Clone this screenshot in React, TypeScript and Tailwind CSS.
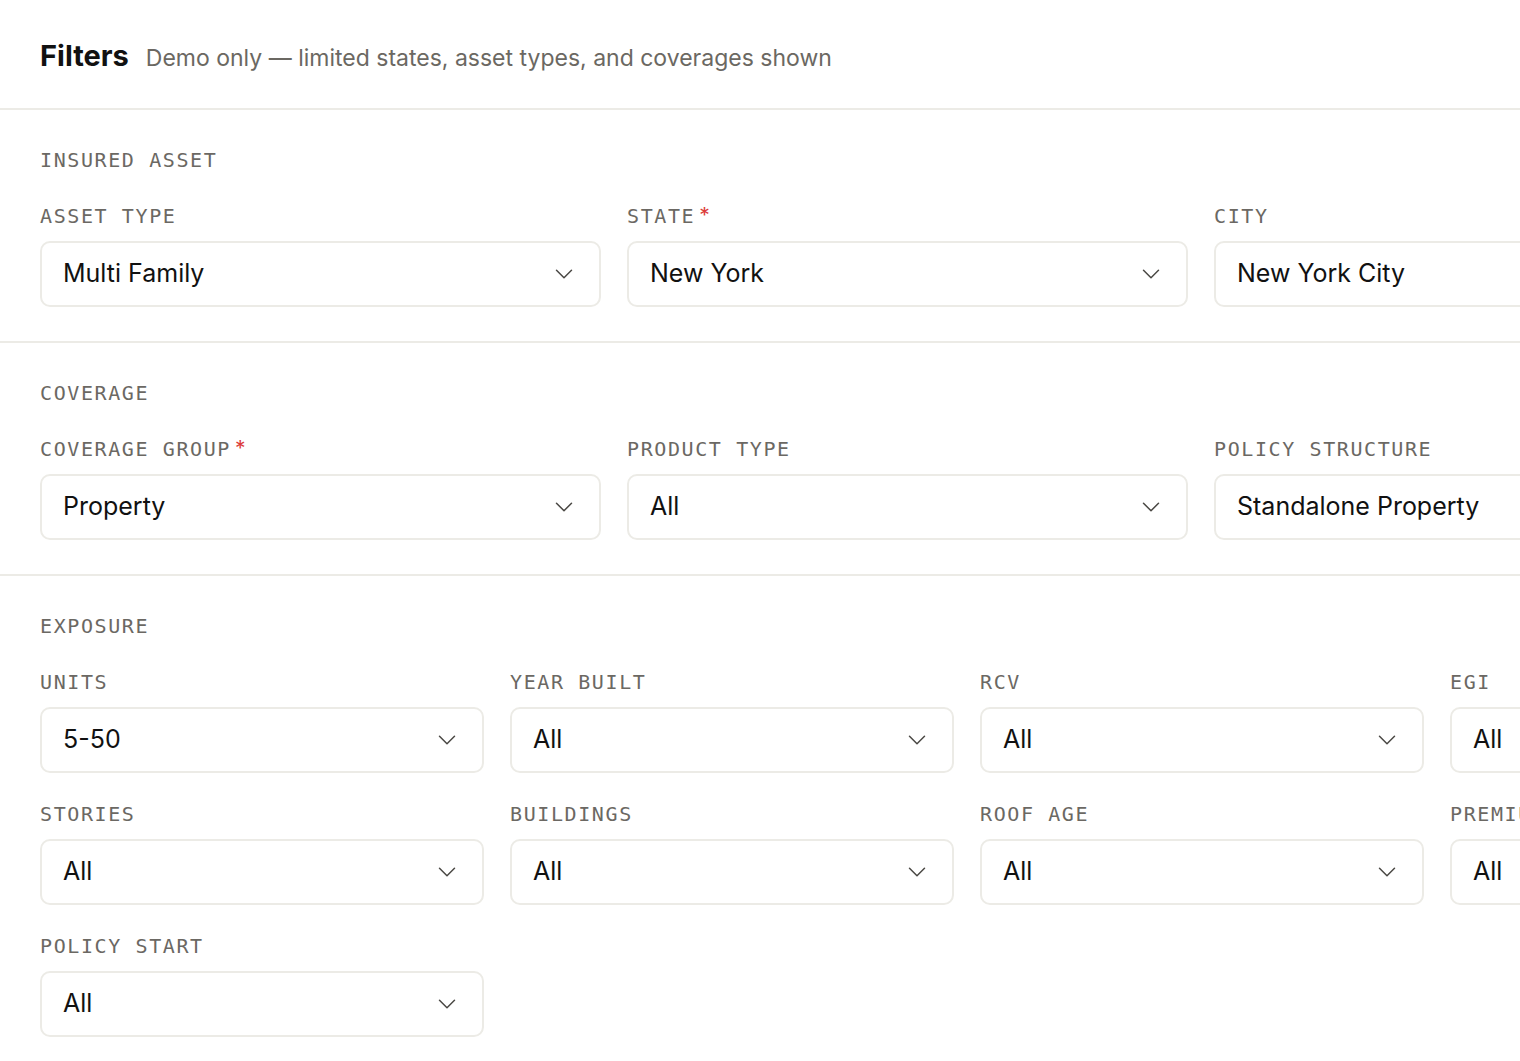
import { ChevronDown } from 'lucide-react'

type Field = { label: string; value: string; required?: boolean }

const SANS = "font-['Inter','Noto_Sans',sans-serif]"
const MONO = "font-['DejaVu_Sans_Mono','Liberation_Mono',monospace]"

const insured: Field[] = [
  { label: 'Asset type', value: 'Multi Family' },
  { label: 'State', value: 'New York', required: true },
  { label: 'City', value: 'New York City' },
]

const coverage: Field[] = [
  { label: 'Coverage group', value: 'Property', required: true },
  { label: 'Product type', value: 'All' },
  { label: 'Policy structure', value: 'Standalone Property' },
]

const exposure: Field[] = [
  { label: 'Units', value: '5-50' },
  { label: 'Year built', value: 'All' },
  { label: 'RCV', value: 'All' },
  { label: 'EGI', value: 'All' },
  { label: 'Stories', value: 'All' },
  { label: 'Buildings', value: 'All' },
  { label: 'Roof age', value: 'All' },
  { label: 'Premium', value: 'All' },
  { label: 'Policy start', value: 'All' },
]

function SelectField({ field }: { field: Field }) {
  return (
    <div className="min-w-0">
      <div className={`mb-[15px] flex h-5 items-center whitespace-nowrap text-[20px] uppercase leading-5 tracking-[1.6px] text-[#6b6863] ${MONO}`}>
        {field.label}
        {field.required && <span className={`ml-[4px] text-[21px] text-[#dc3b3b] ${SANS}`}>*</span>}
      </div>
      <div className="flex h-[66px] items-center justify-between rounded-[10px] border-2 border-[#ecebe6] bg-white pl-[21px] pr-[20px]">
        <span className={`whitespace-nowrap text-[25px] text-[#111111] ${SANS}`}>{field.value}</span>
        <ChevronDown size={30} strokeWidth={1.2} className="shrink-0 text-[#4a4844]" />
      </div>
    </div>
  )
}

function Section({ title, fields, cols }: { title: string; fields: Field[]; cols: 3 | 4 }) {
  return (
    <section className="border-b-2 border-[#ecebe6] px-10 pb-[34px] pt-10">
      <div className={`mb-9 h-5 text-[20px] uppercase leading-5 tracking-[1.6px] text-[#6b6863] ${MONO}`}>{title}</div>
      <div
        className={
          cols === 3
            ? 'grid w-[1735px] grid-cols-[repeat(3,561px)] gap-x-[26px] gap-y-[31px]'
            : 'grid w-[1854px] grid-cols-[repeat(4,444px)] gap-x-[26px] gap-y-[31px]'
        }
      >
        {fields.map(f => (
          <SelectField key={f.label} field={f} />
        ))}
      </div>
    </section>
  )
}

export default function App() {
  return (
    <div className="h-[1061px] w-[1520px] overflow-hidden bg-white">
      <header className="flex h-[110px] items-center border-b-2 border-[#ecebe6] px-10 pt-[4px]">
        <div className="flex items-baseline gap-[17px]">
          <h1 className={`text-[29px] font-bold text-[#111111] ${SANS}`}>Filters</h1>
          <p className={`text-[23px] text-[#6b6862] ${SANS}`}>
            Demo only — limited states, asset types, and coverages shown
          </p>
        </div>
      </header>
      <Section title="Insured asset" fields={insured} cols={3} />
      <Section title="Coverage" fields={coverage} cols={3} />
      <Section title="Exposure" fields={exposure} cols={4} />
    </div>
  )
}
